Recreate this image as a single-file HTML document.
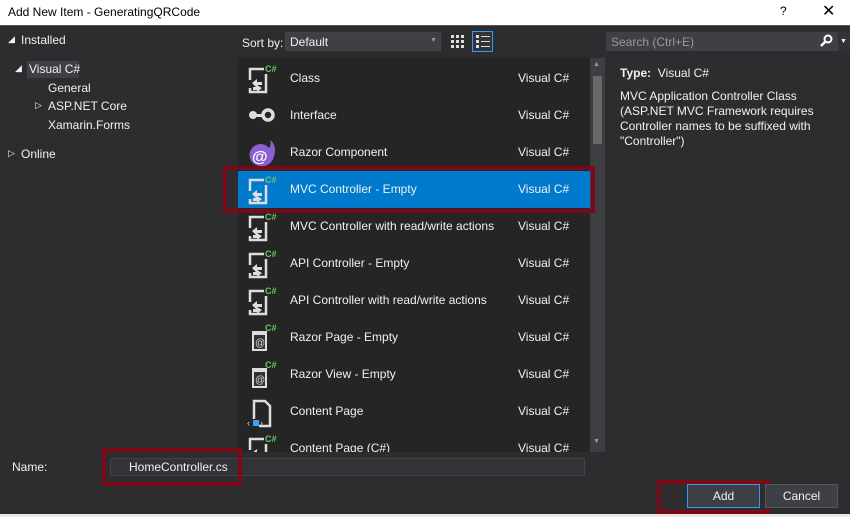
<!DOCTYPE html><html><head><style>
*{margin:0;padding:0;box-sizing:border-box}
body{width:850px;height:517px;background:#2d2d30;font-family:"Liberation Sans",sans-serif;font-size:12px;color:#f1f1f1;position:relative;overflow:hidden}
.a{position:absolute;white-space:nowrap}
.row{position:absolute;left:238px;width:352px;height:37px}
.row .t{position:absolute;left:52px;top:11px}
.row .v{position:absolute;left:280px;top:11px}
.ic{position:absolute;left:8px;top:4px}
</style></head><body>
<div class="a" style="left:0;top:0;width:850px;height:26px;background:#fff;border-bottom:1px solid #555"></div>
<div class="a" style="left:8px;top:5px;color:#000;font-size:12px">Add New Item - GeneratingQRCode</div>
<div class="a" style="left:780px;top:4px;color:#000">?</div>
<div class="a" style="left:822px;top:1px;color:#000;font-size:16px">✕</div>
<div class="a" style="left:8px;top:34px;font-size:9px">◢</div>
<div class="a" style="left:21px;top:33px">Installed</div>
<div class="a" style="left:27px;top:61px;width:52px;height:17px;background:#3f3f46"></div>
<div class="a" style="left:15px;top:63px;font-size:9px">◢</div>
<div class="a" style="left:29px;top:62px">Visual C#</div>
<div class="a" style="left:48px;top:81px">General</div>
<div class="a" style="left:35px;top:100px;font-size:9px">▷</div>
<div class="a" style="left:48px;top:99px">ASP.NET Core</div>
<div class="a" style="left:48px;top:118px">Xamarin.Forms</div>
<div class="a" style="left:8px;top:148px;font-size:9px">▷</div>
<div class="a" style="left:21px;top:147px">Online</div>
<div class="a" style="left:242px;top:36px">Sort by:</div>
<div class="a" style="left:285px;top:32px;width:156px;height:19px;background:#3f3f46;border:1px solid #434346"></div>
<div class="a" style="left:290px;top:35px">Default</div>
<div class="a" style="left:430px;top:37px;font-size:7px;color:#999">▼</div>
<svg class="a" style="left:450px;top:34px" width="16" height="16"><g fill="#ddd"><rect x="1" y="1" width="3" height="3"/><rect x="6" y="1" width="3" height="3"/><rect x="11" y="1" width="3" height="3"/><rect x="1" y="6" width="3" height="3"/><rect x="6" y="6" width="3" height="3"/><rect x="11" y="6" width="3" height="3"/><rect x="1" y="11" width="3" height="3"/><rect x="6" y="11" width="3" height="3"/><rect x="11" y="11" width="3" height="3"/></g></svg>
<div class="a" style="left:472px;top:31px;width:21px;height:21px;border:1px solid #3399ff;background:#333337"></div>
<svg class="a" style="left:475px;top:34px" width="16" height="16"><g fill="#ddd"><rect x="1" y="1" width="3" height="3"/><rect x="6" y="2" width="9" height="1"/><rect x="1" y="6" width="3" height="3"/><rect x="6" y="7" width="9" height="1"/><rect x="1" y="11" width="3" height="3"/><rect x="6" y="12" width="9" height="1"/></g></svg>
<div class="a" style="left:606px;top:32px;width:233px;height:19px;background:#3f3f46"></div>
<div class="a" style="left:611px;top:35px;color:#999">Search (Ctrl+E)</div>
<svg class="a" style="left:819px;top:34px" width="14" height="14"><circle cx="9" cy="5" r="3.5" fill="none" stroke="#fff" stroke-width="2"/><path d="M7 7L2 12" stroke="#fff" stroke-width="2.5"/></svg>
<div class="a" style="left:838px;top:32px;width:12px;height:19px;background:#333337;font-size:7px;padding:6px 2px">▼</div>
<div class="a" style="left:238px;top:58px;width:352px;height:394px;background:#252526"></div>
<div class="a" style="left:590px;top:58px;width:15px;height:394px;background:#3e3e42"></div>
<div class="a" style="left:593px;top:76px;width:9px;height:68px;background:#686868"></div>
<div class="a" style="left:593px;top:61px;font-size:7px;color:#999">▲</div>
<div class="a" style="left:593px;top:438px;font-size:7px;color:#999">▼</div>
<div class="a" style="left:223px;top:166px;width:372px;height:47px;border:4px solid #7a0a18"></div>
<div class="a" style="left:238px;top:171px;width:352px;height:37px;background:#007acc"></div>
<div class="a" style="left:238px;top:58px;width:352px;height:394px;overflow:hidden">
<div id="L"></div>
</div>
<script>
const items=[["Class","c"],["Interface","i"],["Razor Component","r"],["MVC Controller - Empty","c"],["MVC Controller with read/write actions","c"],["API Controller - Empty","c"],["API Controller with read/write actions","c"],["Razor Page - Empty","p"],["Razor View - Empty","p"],["Content Page","d"],["Content Page (C#)","c"]];
const cs='<rect x="19" y="0" width="12" height="9" rx="2" fill="#252526" opacity="0"/><text x="19" y="8" font-size="9" font-weight="bold" fill="#6cc36c" font-family="Liberation Sans">C#</text>';
const icons={
c:'<svg class="ic" width="32" height="30"><path d="M18 5H4v11M4 24v4h16V10" fill="none" stroke="#ddd" stroke-width="2.5"/><path d="M6 19l5-4v3h5v3h-5v3zM16 24l-5 4v-2H7v-3h4v-2z" fill="#ddd"/>'+cs+'</svg>',
i:'<svg class="ic" width="32" height="30"><circle cx="7" cy="14" r="4" fill="#ddd"/><rect x="9" y="13" width="8" height="3" fill="#ddd"/><circle cx="22" cy="14" r="5" fill="none" stroke="#ddd" stroke-width="3.5"/></svg>',
r:'<svg class="ic" width="32" height="30"><path d="M14 28a11 11 0 1 1 9-18c2-2 2-6 1-8 5 3 6 10 4 16a12 12 0 0 1-14 10z" fill="#8c5fd0"/><text x="6" y="24" font-size="16" font-weight="bold" fill="#fff" font-family="Liberation Sans">@</text></svg>',
p:'<svg class="ic" width="32" height="30"><rect x="6" y="8" width="15" height="20" fill="#ddd"/><rect x="8" y="12" width="11" height="14" fill="#333"/><text x="9" y="23" font-size="10" fill="#ddd" font-family="Liberation Sans">@</text>'+cs+'</svg>',
d:'<svg class="ic" width="32" height="32"><path d="M8 22V4h11l5 5v20h-11" fill="none" stroke="#ddd" stroke-width="2.5"/><rect x="7" y="23" width="6" height="6" fill="#3aa0ff"/><text x="1" y="29" font-size="9" fill="#ddd">‹</text><text x="14" y="29" font-size="9" fill="#ddd">›</text></svg>'};
let h='';items.forEach((it,k)=>{h+=`<div class="row" style="left:0;top:${k*37+2}px">${icons[it[1]]}<div class="t">${it[0]}</div><div class="v">Visual C#</div></div>`});
document.getElementById('L').innerHTML=h;
</script>
<div class="a" style="left:620px;top:66px;font-weight:bold">Type:&nbsp; <span style="font-weight:normal">Visual C#</span></div>
<div class="a" style="left:620px;top:89px;line-height:15px;white-space:normal;width:220px">MVC Application Controller Class (ASP.NET MVC Framework requires Controller names to be suffixed with "Controller")</div>
<div class="a" style="left:12px;top:460px">Name:</div>
<div class="a" style="left:110px;top:458px;width:475px;height:18px;background:#333337;border:1px solid #434346"></div>
<div class="a" style="left:129px;top:460px">HomeController.cs</div>
<div class="a" style="left:102px;top:448px;width:140px;height:38px;border:4px solid #7a0a18"></div>
<div class="a" style="left:657px;top:480px;width:113px;height:34px;border:4px solid #7a0a18"></div>
<div class="a" style="left:687px;top:484px;width:73px;height:24px;background:#3f3f46;border:1px solid #3399ff;text-align:center;line-height:22px">Add</div>
<div class="a" style="left:765px;top:484px;width:73px;height:24px;background:#3f3f46;border:1px solid #555;text-align:center;line-height:22px">Cancel</div>
<div class="a" style="left:0;top:514px;width:850px;height:3px;background:#e8e8e8"></div>
</body></html>
